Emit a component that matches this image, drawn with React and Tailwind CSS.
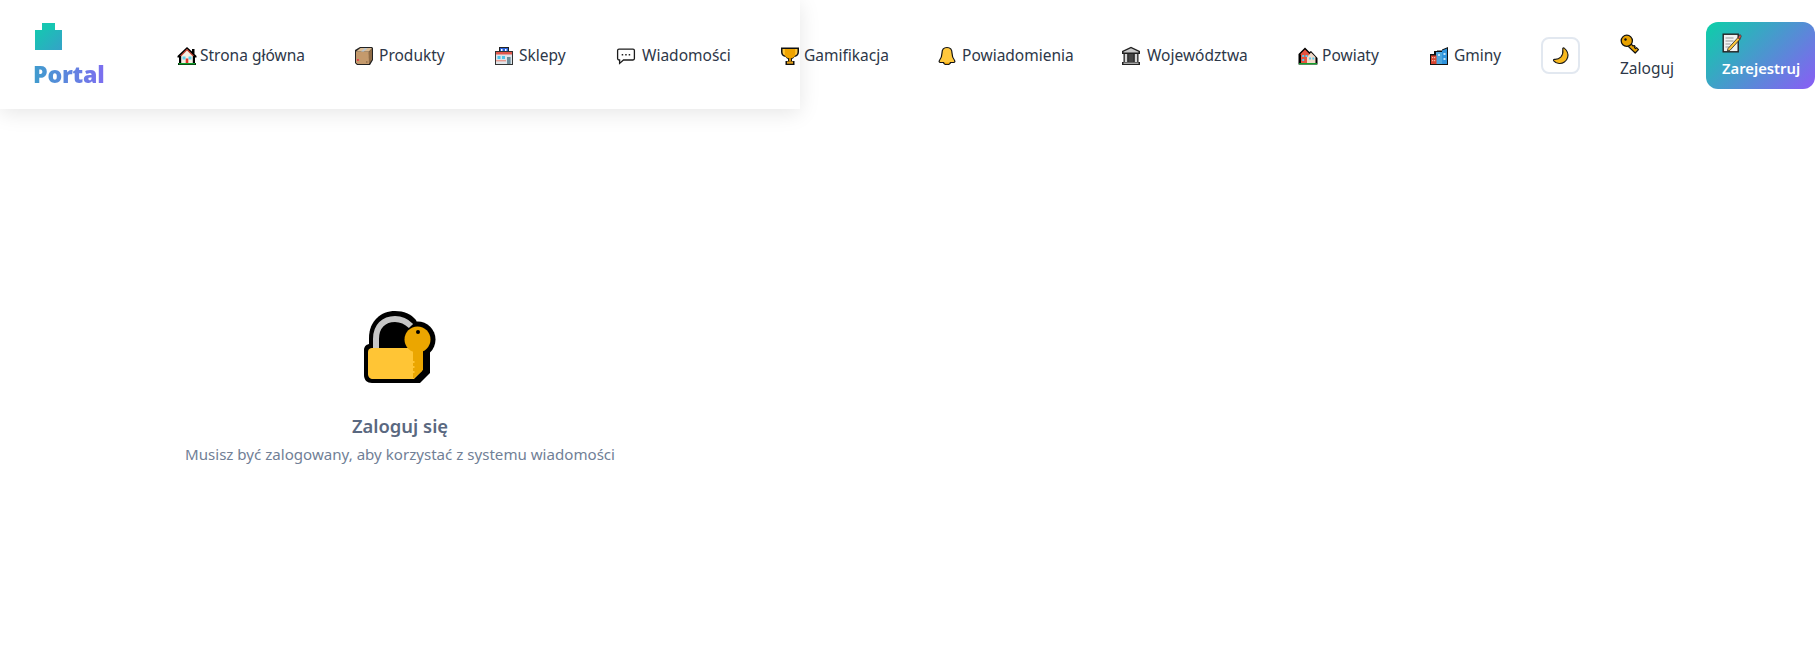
const HouseIcon = () => (
  <svg viewBox="0 0 20 20" className="w-[20px] h-[20px] shrink-0 mt-[1px]">
    <path d="M10 1 15 5.500V3h2.500v5l2 2v1.500H18V17h1v2H1v-2h1v-5.500H.5V10z" fill="#000" />
    <path d="M10 3.200 16.600 10H15.800V17H4.200V10H3.400z" fill="#f7efe4" />
    <path d="M10 2.800 3 10h1.500L10 4.600 15.500 10H17z" fill="#c8402e" />
    <rect x="5.500" y="10.500" width="3" height="3" fill="#5fd4ee" />
    <rect x="11.500" y="10.500" width="3" height="3" fill="#5fd4ee" />
    <rect x="8.700" y="12.500" width="2.600" height="5" fill="#e0352b" />
    <rect x="1.500" y="17" width="17" height="1.500" fill="#12a02c" />
  </svg>
)

const BoxIcon = () => (
  <svg viewBox="0 0 20 20" className="w-[20px] h-[20px] shrink-0 mt-[1px]">
    <path d="M1 4 6 1h12l1 1v12l-3 5H3l-2-2z" fill="#222" />
    <path d="M2 5.500h12.800l.2 12.500H3.500L2 16.500z" fill="#c49a6c" />
    <path d="M15 5.500 18 2.500V13.500L15 18z" fill="#8f6b45" />
    <path d="M2 5.500 6.500 2H18l-3 3.500z" fill="#dcbc94" />
    <path d="M7 5.500 11 2h2.600l-3.800 3.500z" fill="#b9c6cf" />
    <rect x="3" y="13" width="1.800" height="2" fill="#e2404a" />
    <rect x="12" y="15.500" width="1.500" height="1" fill="#7b5a3a" />
  </svg>
)

const ShopIcon = () => (
  <svg viewBox="0 0 20 20" className="w-[20px] h-[20px] shrink-0 mt-[1px]">
    <rect x="5" y="1" width="10" height="6" fill="#222" />
    <rect x="6" y="2" width="8" height="4" fill="#2b63d9" />
    <rect x="7" y="3" width="1.500" height="2" fill="#fff" />
    <rect x="11" y="3" width="1.500" height="2" fill="#fff" />
    <rect x="1" y="5" width="18" height="14" fill="#333" />
    <rect x="2" y="6" width="16" height="12" fill="#dfe5ea" />
    <rect x="2" y="6" width="16" height="2.500" fill="#e2574c" />
    <rect x="3.500" y="10" width="3" height="3" fill="#4fc3ea" />
    <rect x="8" y="10" width="3" height="3" fill="#4fc3ea" />
    <rect x="2" y="14" width="10" height="1.400" fill="#e89a8f" />
    <rect x="13" y="11" width="3.600" height="7" fill="#6b8d9a" />
  </svg>
)

const ChatIcon = () => (
  <svg viewBox="0 0 20 20" className="w-[20px] h-[20px] shrink-0 mt-[1px]">
    <path d="M3 3.200h14a1.400 1.400 0 0 1 1.400 1.400v8a1.400 1.400 0 0 1-1.400 1.400H7.500L3.600 17.400V14H3a1.400 1.400 0 0 1-1.400-1.400v-8A1.400 1.400 0 0 1 3 3.200z" fill="#fff" stroke="#1c1c1c" strokeWidth="1.300" />
    <rect x="5.700" y="8" width="1.500" height="1.500" fill="#222" />
    <rect x="9.200" y="8" width="1.500" height="1.500" fill="#222" />
    <rect x="12.700" y="8" width="1.500" height="1.500" fill="#222" />
  </svg>
)

const TrophyIcon = () => (
  <svg viewBox="0 0 20 20" className="w-[20px] h-[20px] shrink-0 mt-[1px]">
    <path d="M1 1.500h18v4.500c0 3-2 4.600-4.600 5-.7 1-1.400 1.600-2.400 2V15h2.500v4h-9v-4H8v-2c-1-.4-1.700-1-2.400-2C3 10.600 1 9 1 6z" fill="#111" />
    <path d="M2.500 3h15v3c0 2-1.200 3.200-3 3.600l-.5-.1H6l-.5.1C3.700 9.200 2.500 8 2.500 6z" fill="#ffc83d" />
    <path d="M4.800 3h10.400v5.500c0 2.500-2.500 3.800-5.200 3.800S4.800 11 4.800 8.500z" fill="#f0a400" />
    <rect x="9" y="12" width="2" height="3.500" fill="#c98a00" />
    <rect x="7" y="15.500" width="6" height="2.200" fill="#e5a01a" />
  </svg>
)

const BellIcon = () => (
  <svg viewBox="0 0 20 20" className="w-[20px] h-[20px] shrink-0 mt-[1px]">
    <path d="M10 1.500c3.300 0 5 2.500 5 5.500 0 4 1 5.500 2.600 7.500.6.800.2 2-.9 2h-3.200c-.3 1.300-1.500 2-3.500 2s-3.200-.7-3.500-2H3.300c-1.100 0-1.500-1.200-.9-2C4 12.500 5 11 5 7c0-3 1.700-5.500 5-5.500z" fill="#ffc83d" stroke="#111" strokeWidth="1.200" />
    <path d="M7.500 16.800h5c-.3 1-1.200 1.400-2.500 1.400s-2.200-.4-2.500-1.400z" fill="#e89c00" />
  </svg>
)

const BankIcon = () => (
  <svg viewBox="0 0 20 20" className="w-[20px] h-[20px] shrink-0 mt-[1px]">
    <path d="M10 .800 19 5v3h-1.500v8H19v3H1v-3h1.500V8H1V5z" fill="#222" />
    <path d="M10 2.200 17.500 5.800v.800h-15v-.800z" fill="#c8c8c8" />
    <rect x="3.800" y="8" width="2.400" height="8" fill="#d6d6d6" />
    <rect x="13.800" y="8" width="2.400" height="8" fill="#d6d6d6" />
    <rect x="7.500" y="8" width="5" height="8" fill="#444" />
    <rect x="2.500" y="16.500" width="15" height="1.500" fill="#a8a8a8" />
  </svg>
)

const HousesIcon = () => (
  <svg viewBox="0 0 20 20" className="w-[20px] h-[20px] shrink-0 mt-[1px]">
    <path d="M7 1.500 11.500 6l1.500-1 6.500 7v6.500H.5V8z" fill="#000" />
    <path d="M7 3.500 2 8.500h1V17h8V8.500h1z" fill="#e5533f" />
    <path d="M13 6.500 9 11v6h8.500v-6z" fill="#f1d9c8" />
    <rect x="4.200" y="9" width="2" height="2" fill="#58cdf0" />
    <rect x="7.500" y="9" width="2" height="2" fill="#58cdf0" />
    <rect x="4.200" y="13" width="2" height="2" fill="#58cdf0" />
    <rect x="11" y="11.500" width="2" height="2" fill="#58cdf0" />
    <rect x="14.300" y="11.500" width="2" height="2" fill="#58cdf0" />
    <rect x="1" y="17" width="18" height="1.400" fill="#12a02c" />
  </svg>
)

const CityIcon = () => (
  <svg viewBox="0 0 20 20" className="w-[20px] h-[20px] shrink-0 mt-[1px]">
    <path d="M19 1v18H1V8h4V5h3v-.5h5V3.500z" fill="#111" />
    <path d="M7 6h6v12H7z" fill="#4da6dd" />
    <path d="M13 4.500 18 2.500V18h-5z" fill="#2f93dc" />
    <rect x="2" y="9.500" width="5.500" height="8.500" fill="#d8452f" />
    <rect x="3" y="11" width="1.200" height="1.200" fill="#f5b8a8" />
    <rect x="5" y="11" width="1.200" height="1.200" fill="#f5b8a8" />
    <rect x="3" y="14" width="1.200" height="1.200" fill="#f5b8a8" />
    <rect x="5" y="14" width="1.200" height="1.200" fill="#f5b8a8" />
    <rect x="9" y="8" width="2" height="2" fill="#bfe6f8" />
    <rect x="14.500" y="7" width="2" height="2" fill="#bfe6f8" />
    <rect x="14.500" y="12" width="2" height="2" fill="#bfe6f8" />
  </svg>
)

const MoonIcon = () => (
  <svg viewBox="0 0 20 20" className="w-[18px] h-[18px] mt-[2px]">
    <path d="M12 1.500c.5-.6 1.200-.6 1.800 0 3 2.500 4.600 6.200 3.600 10-1.200 4.500-5.300 7.200-9.500 6.800-2.300-.2-4.500-1.200-6-3-.5-.7-.1-1.600.8-1.600 2.600.2 5.200-.6 7-2.500 2-2.300 2.700-5.300 2.300-8.200 0-.6 0-1.100 0-1.500z" fill="#f8b91f" stroke="#1a1a1a" strokeWidth="1.300" strokeLinejoin="round" />
  </svg>
)

const KeyIcon = () => (
  <svg viewBox="0 0 20 20" className="w-[20px] h-[20px]">
    <path d="M7.200 11.400 15.200 19l3.300-3.300-2-2-1 .8-1-1 .6-1-1-1-1 .6-3.700-4.200z" fill="#e8a200" stroke="#111" strokeWidth="1.200" strokeLinejoin="round" />
    <circle cx="6.800" cy="6.800" r="5.600" fill="#e8a200" stroke="#111" strokeWidth="1.300" />
    <circle cx="5.500" cy="5.500" r="1.200" fill="#111" />
  </svg>
)

const MemoIcon = () => (
  <svg viewBox="0 0 20 20" className="w-[20px] h-[20px]">
    <rect x="1.200" y="1.200" width="15" height="17.600" fill="#f2f2f2" stroke="#222" strokeWidth="1.400" />
    <path d="M3.500 5h8M3.500 8h8M3.500 11h5M3.500 14h4" stroke="#999" strokeWidth="1" />
    <path d="M6 15.500 16 4.500l2 1.800-10 11-2.600.5z" fill="#ffc83d" stroke="#222" strokeWidth=".8" />
    <path d="M16 4.500 18 1.500l1.300 1.500-1.300 3.300z" fill="#e2574c" stroke="#222" strokeWidth=".6" />
  </svg>
)

const LockKeyIcon = () => (
  <svg viewBox="0 0 72 72" className="w-[72px] h-[72px]">
    <path d="M5 38V27C5 10 17 0 31 0c9 0 16 3 21 9l8 21v8z" fill="#000" />
    <path d="M6 33h60v29L56 72H8c-5 0-8-3-8-8V39c0-4 3-6 6-6z" fill="#000" />
    <circle cx="53.500" cy="28.500" r="18" fill="#000" />
    <path d="M12 37V28C12 15 20 8 31 8c7 0 12 3 16 7" fill="none" stroke="#c6c6c6" strokeWidth="6" />
    <path d="M8 37h50v23l-8 8H9c-3 0-5-2-5-5V41c0-3 2-4 4-4z" fill="#ffc535" />
    <circle cx="53.500" cy="28.500" r="13" fill="#eba600" />
    <path d="M49 38h10v21l-9 8h-1v-5h1.500v-2H49v-3h1.500v-2H49v-3h1.500v-2H49z" fill="#eba600" />
    <circle cx="54" cy="21" r="2" fill="#000" />
  </svg>
)

const navItems = [
  { label: 'Strona główna', icon: HouseIcon, w: 'w-[128px]', gap: 'mr-[49px]', iconGap: 'gap-[3px]' },
  { label: 'Produkty', icon: BoxIcon, w: 'w-[91px]', gap: 'mr-[49px]', iconGap: 'gap-[5px]' },
  { label: 'Sklepy', icon: ShopIcon, w: 'w-[73px]', gap: 'mr-[49px]', iconGap: 'gap-[5px]' },
  { label: 'Wiadomości', icon: ChatIcon, w: 'w-[115px]', gap: 'mr-[49px]', iconGap: 'gap-[6px]' },
  { label: 'Gamifikacja', icon: TrophyIcon, w: 'w-[109px]', gap: 'mr-[48px]', iconGap: 'gap-[4px]' },
  { label: 'Powiadomienia', icon: BellIcon, w: 'w-[134px]', gap: 'mr-[50px]', iconGap: 'gap-[5px]' },
  { label: 'Województwa', icon: BankIcon, w: 'w-[127px]', gap: 'mr-[50px]', iconGap: 'gap-[6px]' },
  { label: 'Powiaty', icon: HousesIcon, w: 'w-[83px]', gap: 'mr-[48px]', iconGap: 'gap-[4px]' },
  { label: 'Gminy', icon: CityIcon, w: 'w-[72px]', gap: 'mr-[40px]', iconGap: 'gap-[5px]' },
]

const font = "font-['Noto_Sans',sans-serif]"

export default function App() {
  return (
    <div className={`${font} min-h-[650px] bg-white`}>
      <header className="w-[800px] h-[109px] bg-white shadow-[0_4px_20px_rgba(0,0,0,0.1)] flex items-center pl-[33px]">
        <a className="flex flex-col self-start pt-[23px] shrink-0 w-[144px]">
          <span className="ml-[9px] w-[13px] h-[7px] bg-[#17c6b2]" />
          <span className="ml-[2px] w-[27px] h-[20px] bg-[linear-gradient(135deg,#14c8b0,#35a2c8)]" />
          <span className="mt-[12px] text-[23.2px] leading-[24px] font-black tracking-[-0.01em] bg-[linear-gradient(90deg,#3f9ccd,#7d6ef0)] bg-clip-text text-transparent w-[72px]">
            Portal
          </span>
        </a>
        <nav className="flex items-center shrink-0 pt-[1px]">
          {navItems.map((item) => (
            <a key={item.label} className={`flex items-center ${item.iconGap} shrink-0 ${item.w} ${item.gap} text-[15.5px] text-[#2d3748] whitespace-nowrap`}>
              <item.icon />
              <span className="mt-[2px]">{item.label}</span>
            </a>
          ))}
          <button className="w-[39px] h-[37px] shrink-0 mr-[40px] rounded-[8px] border-2 border-[#e2e8f0] bg-white flex items-center justify-center">
            <MoonIcon />
          </button>
          <a className="flex flex-col shrink-0 w-[86px] mt-[2px] text-[15.5px] leading-[21px] text-[#2d3748] gap-[4px]">
            <KeyIcon />
            Zaloguj
          </a>
          <a className="w-[109px] h-[67px] shrink-0 rounded-[12px] bg-[linear-gradient(135deg,#0bd0a8,#8b5cf6)] pl-[16px] pt-[11px] flex flex-col gap-[5px] text-[14.8px] leading-[21px] font-semibold text-white">
            <MemoIcon />
            Zarejestruj
          </a>
        </nav>
      </header>
      <main className="w-[800px] flex flex-col items-center pt-[202px]">
        <LockKeyIcon />
        <h2 className="mt-[29px] text-[18.4px] leading-[28px] font-semibold text-[#5a6880]">Zaloguj się</h2>
        <p className="mt-[2px] text-[15.1px] leading-[24px] text-[#718096]">Musisz być zalogowany, aby korzystać z systemu wiadomości</p>
      </main>
    </div>
  )
}
